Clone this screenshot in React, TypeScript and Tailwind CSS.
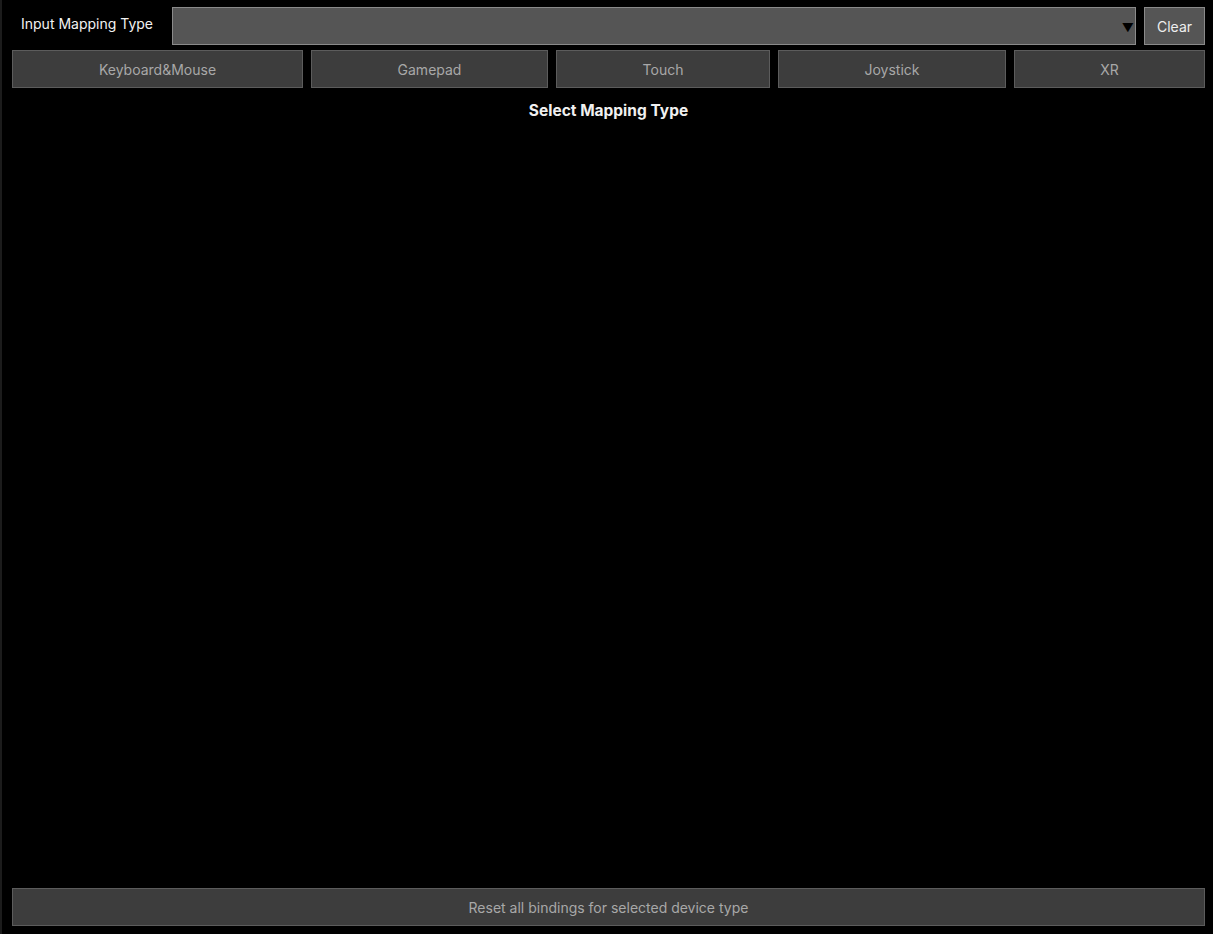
export default function App() {
  const types = [
    { name: "Keyboard&Mouse", w: "basis-[291px]" },
    { name: "Gamepad", w: "basis-[237px]" },
    { name: "Touch", w: "basis-[214px]" },
    { name: "Joystick", w: "basis-[228px]" },
    { name: "XR", w: "basis-[191px]" },
  ];

  return (
    <div
      className="h-[934px] w-full bg-black border-l-2 border-[#1c1c1c] pl-[10px] pr-[8px] pt-[7px] pb-[8px] flex flex-col text-[14px]"
      style={{ fontFamily: "Inter, 'Noto Sans', sans-serif" }}
    >
      <div className="flex items-center h-[38px]">
        <div className="w-[160px] pl-[9px] pb-[6px] text-[#f2f2f2]">Input Mapping Type</div>
        <div className="flex-1 h-full bg-[#555555] border border-[#8a8a8a] relative">
          <span className="absolute right-[1px] top-[14px] text-black text-[12px] leading-none">▼</span>
        </div>
        <button className="ml-[8px] w-[61px] h-full bg-[#555555] border border-[#8a8a8a] text-[#eeeeee]">Clear</button>
      </div>

      <div className="flex gap-[8px] mt-[5px] h-[38px]">
        {types.map((t) => (
          <button
            key={t.name}
            className={`${t.w} shrink-0 h-full bg-[#3d3d3d] border border-[#5c5c5c] text-[#a8a8a8]`}
          >
            {t.name}
          </button>
        ))}
      </div>

      <div className="text-center font-bold text-[#f0f0f0] text-[15.5px] mt-[11px]">Select Mapping Type</div>

      <div className="flex-1" />

      <button className="h-[38px] w-full bg-[#3d3d3d] border border-[#5c5c5c] text-[#a8a8a8]">
        Reset all bindings for selected device type
      </button>
    </div>
  );
}
